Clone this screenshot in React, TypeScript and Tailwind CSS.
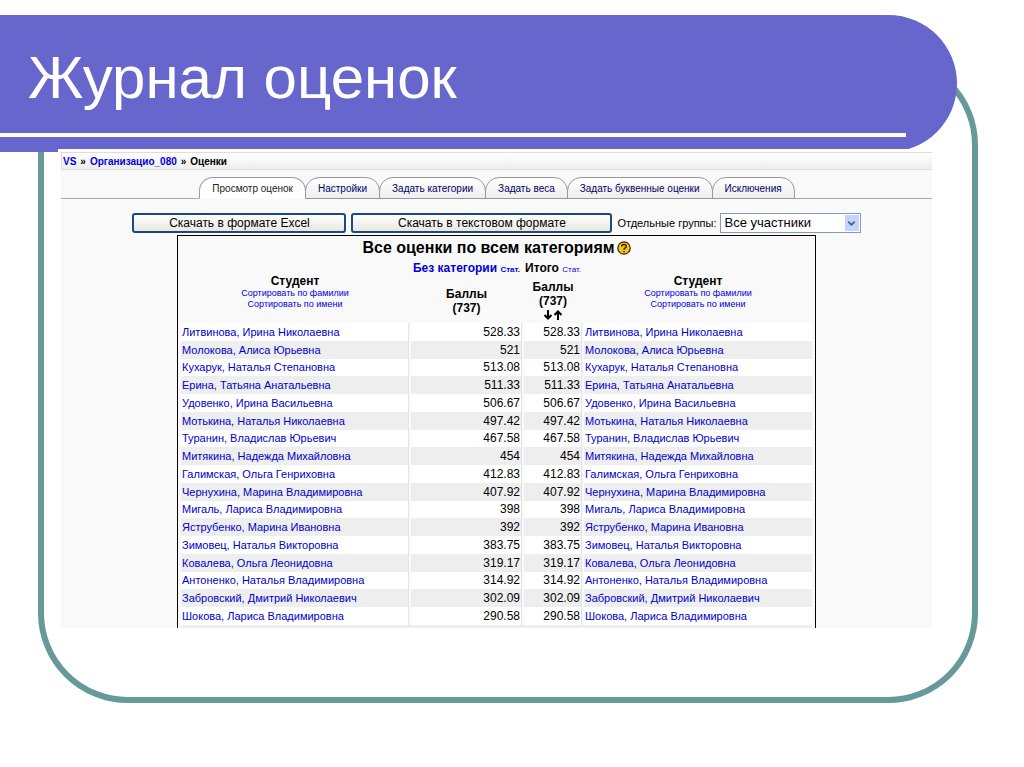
import React, { useState } from 'react';
import { ChevronDown } from 'lucide-react';

interface Grade {
  name: string;
  score: string;
}

const tabs = [
  'Просмотр оценок',
  'Настройки',
  'Задать категории',
  'Задать веса',
  'Задать буквенные оценки',
  'Исключения',
];

const grades: Grade[] = [
  { name: 'Литвинова, Ирина Николаевна', score: '528.33' },
  { name: 'Молокова, Алиса Юрьевна', score: '521' },
  { name: 'Кухарук, Наталья Степановна', score: '513.08' },
  { name: 'Ерина, Татьяна Анатальевна', score: '511.33' },
  { name: 'Удовенко, Ирина Васильевна', score: '506.67' },
  { name: 'Мотькина, Наталья Николаевна', score: '497.42' },
  { name: 'Туранин, Владислав Юрьевич', score: '467.58' },
  { name: 'Митякина, Надежда Михайловна', score: '454' },
  { name: 'Галимская, Ольга Генриховна', score: '412.83' },
  { name: 'Чернухина, Марина Владимировна', score: '407.92' },
  { name: 'Мигаль, Лариса Владимировна', score: '398' },
  { name: 'Яструбенко, Марина Ивановна', score: '392' },
  { name: 'Зимовец, Наталья Викторовна', score: '383.75' },
  { name: 'Ковалева, Ольга Леонидовна', score: '319.17' },
  { name: 'Антоненко, Наталья Владимировна', score: '314.92' },
  { name: 'Забровский, Дмитрий Николаевич', score: '302.09' },
  { name: 'Шокова, Лариса Владимировна', score: '290.58' },
];

function StudentHeader() {
  return (
    <th rowSpan={2} className="align-middle">
      <div className="leading-[14px]">Студент</div>
      <div className="flex flex-col text-[9px] leading-[11px] font-normal text-[#0000dd]">
        <a href="#lastname">Сортировать по фамилии</a>
        <a href="#firstname">Сортировать по имени</a>
      </div>
    </th>
  );
}

function App() {
  const [active, setActive] = useState(0);

  return (
    <div className="min-h-screen bg-white pt-[15px] font-['Liberation_Sans',Arial,sans-serif] text-black">
      {/* Slide title */}
      <header className="relative z-10 mr-[67px] flex h-[137px] flex-col justify-end rounded-r-full bg-[#6666cc] pb-[15px]">
        <h1 className="pl-7 text-[60px] leading-[72px] text-white">Журнал оценок</h1>
        <div className="mt-[19px] mr-[51px] h-1 bg-white"></div>
      </header>

      <main className="mr-[46px] ml-[38px] -mt-[97px] rounded-[90px] border-[6px] border-[#669999] pt-[88px] pr-10 pb-[69px] pl-[14px]">
        <div className="relative z-20 bg-white pt-[3px] pl-[3px]">
          <div className="bg-[#f9f9f9]">
            <nav className="flex h-[18px] items-center gap-1 border border-r-0 border-[#dddddd] bg-linear-to-b from-white to-[#eeeeee] pl-px text-[10px] font-bold">
              <a href="#vs" className="text-[#0000dd]">VS</a>
              <span>»</span>
              <a href="#course" className="text-[#0000dd]">Организацио_080</a>
              <span>»</span>
              <span>Оценки</span>
            </nav>

            {/* Tabs */}
            <div className="mt-[7px] flex h-[22px] justify-center border-b border-[#aaaaaa]">
              {tabs.map((tab, i) => (
                <button
                  key={tab}
                  onClick={() => setActive(i)}
                  className={`-mr-px h-[22px] rounded-t-[14px] border border-[#999999] px-3 text-[10px] whitespace-nowrap ${
                    i === active
                      ? 'border-b-white bg-white text-[#222222]'
                      : 'bg-linear-to-b from-white to-[#eeeeee] text-[#000066]'
                  }`}
                >
                  {tab}
                </button>
              ))}
            </div>

            {/* Export and group filter */}
            <div className="mt-[14px] flex h-5 items-stretch justify-center text-[12px]">
              <button className="mr-[5px] w-[214px] rounded-[3px] border-2 border-[#1c4a7c] bg-linear-to-b from-white to-[#e8e7e0] leading-4">
                Скачать в формате Excel
              </button>
              <button className="mr-[5px] w-[261px] rounded-[3px] border-2 border-[#1c4a7c] bg-linear-to-b from-white to-[#e8e7e0] leading-4">
                Скачать в текстовом формате
              </button>
              <label htmlFor="group" className="mr-[3px] self-center text-[11px] whitespace-nowrap">
                Отдельные группы:
              </label>
              <div className="relative w-[141px]">
                <select id="group" className="block h-5 w-full appearance-none border border-[#7f9db9] bg-white pl-1 text-[13px] leading-4">
                  <option>Все участники</option>
                </select>
                <span className="pointer-events-none absolute top-0.5 right-0.5 flex h-4 w-[14px] items-center justify-center bg-[#c3d3fd] text-[#4d6185]">
                  <ChevronDown size={11} strokeWidth={4} />
                </span>
              </div>
            </div>

            {/* Grades */}
            <div className="mx-auto mt-0.5 w-[639px] border border-b-0 border-black px-px">
              <div className="flex h-6 items-center justify-center gap-0.5">
                <h2 className="text-[16px] font-bold">Все оценки по всем категориям</h2>
                <button aria-label="Справка">
                  <svg width="14" height="14" viewBox="0 0 14 14">
                    <circle cx="7" cy="7" r="6.2" fill="#f7c21c" stroke="#3a2c08" strokeWidth="1.2" />
                    <path d="M4.7 5.6C4.7 2.8 9.3 2.8 9.3 5.5C9.3 7 7 7 7 8.7M7 9.9V11.2" fill="none" stroke="#2a2108" strokeWidth="1.5" />
                  </svg>
                </button>
              </div>
              <table className="h-[365px] w-full table-fixed border-separate border-spacing-x-0.5 border-spacing-y-0 text-[12px]">
                <colgroup>
                  <col />
                  <col className="w-[111px]" />
                  <col className="w-[58px]" />
                  <col />
                </colgroup>
                <thead>
                  <tr className="h-[18px]">
                    <StudentHeader />
                    <th className="leading-[14px] whitespace-nowrap">
                      <a href="#uncategorized" className="text-[#0000dd]">Без категории</a>{' '}
                      <a href="#stats" className="text-[8px] text-[#0000dd]">Стат.</a>
                    </th>
                    <th className="leading-[14px] whitespace-nowrap">
                      Итого <a href="#total-stats" className="text-[8px] font-normal text-[#0000dd]">Стат.</a>
                    </th>
                    <StudentHeader />
                  </tr>
                  <tr className="h-[45px] leading-[14px]">
                    <th>Баллы<br />(737)</th>
                    <th>
                      Баллы<br />(737)
                      <div className="flex justify-center">
                        <svg width="20" height="14" viewBox="0 0 20 14" fill="none" stroke="black" strokeWidth="2">
                          <path d="M5 2V10M1.5 7L5 10.5L8.5 7M15 12V4M11.5 7L15 3.5L18.5 7" />
                        </svg>
                      </div>
                    </th>
                  </tr>
                </thead>
                <tbody className="leading-[14px]">
                  {grades.map((grade) => (
                    <tr key={grade.name} className="bg-white even:bg-[#eeeeee]">
                      <td className="border-r border-[#e4e4e4] pl-px text-[11px] whitespace-nowrap">
                        <a href="#student" className="text-[#0000cc]">{grade.name}</a>
                      </td>
                      <td className="border-r border-[#e4e4e4] pr-px text-right">{grade.score}</td>
                      <td className="border-r border-[#e4e4e4] pr-px text-right">{grade.score}</td>
                      <td className="pl-px text-[11px] whitespace-nowrap">
                        <a href="#student" className="text-[#0000cc]">{grade.name}</a>
                      </td>
                    </tr>
                  ))}
                </tbody>
              </table>
              <div className="mx-0.5 h-[3px] bg-[#eeeeee]"></div>
            </div>
          </div>
        </div>
      </main>
    </div>
  );
}

export default App;
